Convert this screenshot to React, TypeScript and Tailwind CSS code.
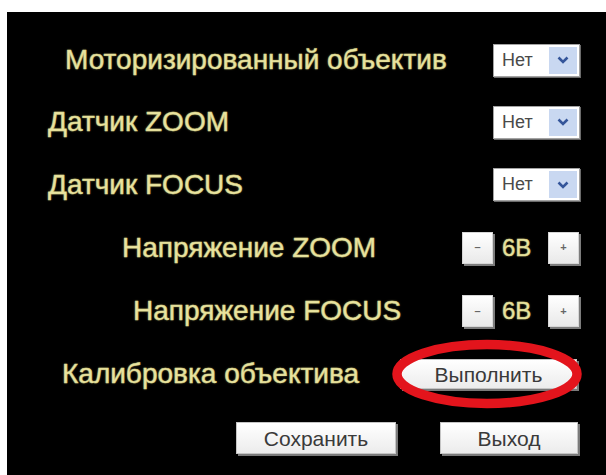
import React from "react";

const font = "font-['Liberation_Sans',Arial,sans-serif]";
const glow =
  "text-[#e9e4a0] [-webkit-text-stroke:0.4px_#d9d38c] [text-shadow:0_0_2px_rgba(200,192,110,0.7)]";
const label = `${glow} text-[28px] leading-none whitespace-nowrap`;

const Select: React.FC<{ value: string }> = ({ value }) => (
  <div className="ml-auto mr-[26px] flex h-[33px] w-[87px] items-center border border-[#a3a3a3] bg-white shadow-[1px_1px_0_#6b6b6b]">
    <span className="pl-[8px] text-[18px] text-[#4a4a4a]">{value}</span>
    <span className="ml-auto mr-[2px] flex h-[27px] w-[28px] items-center justify-center bg-[#c9d8f1]">
      <svg width="12" height="8" viewBox="0 0 12 8">
        <path d="M1.5 1.5 6 6 10.5 1.5" fill="none" stroke="#34559a" strokeWidth="2.6" />
      </svg>
    </span>
  </div>
);

const SmallBtn: React.FC<{ sign: string }> = ({ sign }) => (
  <button className="flex h-[32px] w-[31px] items-center justify-center border border-[#d6d6d6] bg-gradient-to-b from-white to-[#e9e9e9] text-[11px] font-bold leading-none text-[#666] shadow-[2px_2px_0_#7c7c7c]">
    {sign}
  </button>
);

const Stepper: React.FC<{ value: string }> = ({ value }) => (
  <div className="ml-auto mr-[27px] flex items-center">
    <SmallBtn sign="–" />
    <span className={`${glow} ml-[9px] mr-[9px] w-[37px] text-[24px] leading-none`}>{value}</span>
    <SmallBtn sign="+" />
  </div>
);

const Btn: React.FC<{ size: string; children: React.ReactNode; className?: string }> = ({
  size,
  children,
  className = "",
}) => (
  <button
    className={`${size} ${className} flex items-center justify-center border border-[#c4c4c4] bg-gradient-to-b from-white to-[#ececec] text-[21px] leading-none text-[#3a3a3a] shadow-[2px_2px_0_#7a7a7a]`}
  >
    {children}
  </button>
);

export default function App() {
  return (
    <div className={`${font} h-[475px] w-[606px] bg-white pl-[7px] pt-[12px]`}>
      <div className="flex h-full w-full flex-col bg-black pt-[17px]">
        <div className="flex h-[62px] shrink-0 items-center">
          <span className={`${label} ml-[58px]`}>Моторизированный объектив</span>
          <Select value="Нет" />
        </div>
        <div className="flex h-[62px] shrink-0 items-center">
          <span className={`${label} ml-[41px]`}>Датчик ZOOM</span>
          <Select value="Нет" />
        </div>
        <div className="flex h-[63px] shrink-0 items-center">
          <span className={`${label} ml-[41px]`}>Датчик FOCUS</span>
          <Select value="Нет" />
        </div>
        <div className="flex h-[63px] shrink-0 items-center">
          <span className={`${label} ml-[115px]`}>Напряжение ZOOM</span>
          <Stepper value="6В" />
        </div>
        <div className="flex h-[64px] shrink-0 items-center">
          <span className={`${label} ml-[126px]`}>Напряжение FOCUS</span>
          <Stepper value="6В" />
        </div>
        <div className="flex h-[62px] shrink-0 items-center">
          <span className={`${label} ml-[55px]`}>Калибровка объектива</span>
          <div className="relative ml-auto mr-[29px]">
            <Btn size="h-[30px] w-[177px]">Выполнить</Btn>
            {/* red ring drawn round the calibration button */}
            <svg
              className="pointer-events-none absolute left-[-9px] top-[-20px] h-[70px] w-[192px]"
              viewBox="0 0 192 70"
            >
              <ellipse cx="96" cy="35" rx="90" ry="29.5" fill="none" stroke="#e3141c" strokeWidth="9.5" />
            </svg>
          </div>
        </div>
        <div className="flex h-[66px] shrink-0 items-center">
          <Btn size="h-[32px] w-[160px]" className="ml-[229px]">
            Сохранить
          </Btn>
          <Btn size="h-[32px] w-[138px]" className="ml-[44px]">
            Выход
          </Btn>
        </div>
      </div>
    </div>
  );
}
